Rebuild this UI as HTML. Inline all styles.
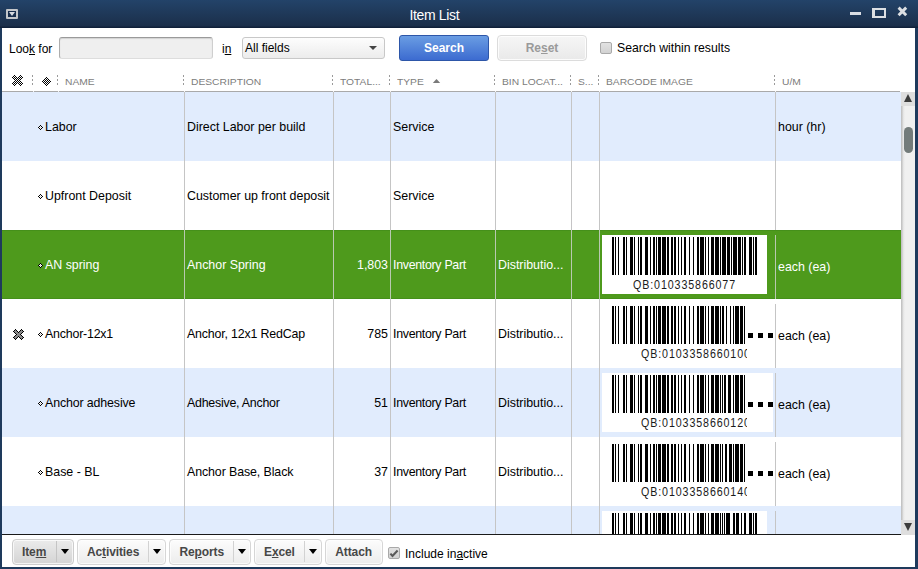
<!DOCTYPE html><html><head><meta charset="utf-8"><style>
*{margin:0;padding:0;box-sizing:border-box}
html,body{width:918px;height:569px;overflow:hidden;background:#fff}
body{position:relative;font-family:"Liberation Sans", sans-serif;color:#000}
.a{position:absolute}
.t{position:absolute;white-space:nowrap;line-height:14px}
.cell{font-size:12.4px}
.hd{position:absolute;font-size:9.7px;transform:scaleX(1.06);transform-origin:0 0;color:#7c7c7c;white-space:nowrap;line-height:12px;top:75.6px}
.sep{position:absolute;top:75px;width:1px;height:11px;background:repeating-linear-gradient(#9a9a9a 0 2px,transparent 2px 4px)}
.btn{position:absolute;top:539px;height:26px;border:1px solid #d6d6d6;border-radius:4px;background:linear-gradient(#fcfcfc,#ececec);box-shadow:inset 0 0 0 1px rgba(255,255,255,.7);font-weight:bold;font-size:12px;letter-spacing:-0.12px;color:#474747;white-space:nowrap}
.bt{position:absolute;top:5px;line-height:14px}
.dd{position:absolute;top:1px;width:1px;height:21px;background:#d2d2d2}
.arr{position:absolute;top:9px;width:0;height:0;border-left:4px solid transparent;border-right:4px solid transparent;border-top:5px solid #000}
u{text-decoration:underline;text-underline-offset:1px}
</style></head><body>

<div class="a" style="left:0;top:0;width:918px;height:569px;background:#1e3a5c"></div>
<div class="a" style="left:0;top:0;width:918px;height:28px;background:linear-gradient(#234369 0px,#1b2f4a 26px,#10213a 27px,#10213a 28px)"></div>
<div class="a" style="left:2px;top:28px;width:913px;height:539px;background:#fff"></div>
<div class="a" style="left:6px;top:9px;width:11.6px;height:9.8px;border:2px solid #c3c6ca;border-radius:1px;background:#172d4c"></div>
<div class="a" style="left:9px;top:12px;width:0;height:0;border-left:3px solid transparent;border-right:3px solid transparent;border-top:4px solid #d6dae0"></div>
<div class="t" style="left:409.5px;top:7px;font-size:14px;letter-spacing:-0.35px;color:#fff;line-height:16px">Item List</div>
<div class="a" style="left:850px;top:11.6px;width:11px;height:3px;background:#d9dde3"></div>
<div class="a" style="left:872px;top:8px;width:14px;height:10px;border:2px solid #dcdfe3;border-left-width:3px"></div>
<svg class="a" style="left:896.5px;top:5.9px" width="11" height="11" viewBox="0 0 11 11"><path d="M1.6 1.6L9.2 9.2M9.2 1.6L1.6 9.2" stroke="#dcdfe3" stroke-width="2.9"/></svg>
<div class="t" style="left:9px;top:42px;font-size:12px">Loo<u>k</u> for</div>
<div class="a" style="left:59px;top:37px;width:154px;height:22px;border:1px solid;border-color:#9a9a9a #cfcfcf #dddddd #adadad;border-radius:3px;background:#efefef;box-shadow:inset 0 1px 1px rgba(0,0,0,.12)"></div>
<div class="t" style="left:222px;top:42px;font-size:12px">i<u>n</u></div>
<div class="a" style="left:242px;top:37px;width:143px;height:22px;border:1px solid #c8c8c8;border-radius:3px;background:linear-gradient(#fdfdfd,#ececec)"></div>
<div class="t" style="left:245px;top:41px;font-size:12px">All fields</div>
<div class="a" style="left:369px;top:46px;width:0;height:0;border-left:4px solid transparent;border-right:4px solid transparent;border-top:4px solid #454545"></div>
<div class="a" style="left:399px;top:35px;width:90px;height:26px;border:1px solid #2d56a8;border-radius:3px;background:linear-gradient(#6a9de3,#3c6bd0);color:#fff;font-weight:bold;font-size:12px;text-align:center;line-height:24px">Search</div>
<div class="a" style="left:497px;top:35px;width:90px;height:26px;border:1px solid #dcdcdc;border-radius:4px;background:linear-gradient(#f6f6f6,#e9e9e9);box-shadow:inset 0 0 0 1px rgba(255,255,255,.8);color:#9a9a9a;font-weight:bold;font-size:12px;text-align:center;line-height:25px">Re<u>s</u>et</div>
<div class="a" style="left:600px;top:42px;width:12px;height:12px;border:1px solid #a9a9a9;border-radius:2px;background:linear-gradient(#e2e2e2,#d2d2d2)"></div>
<div class="t" style="left:617px;top:41px;font-size:12.25px">Search within results</div>
<svg class="a" style="left:10px;top:73px" width="16" height="16" shape-rendering="crispEdges"><path d="M4 2h1v1h-1zM10 2h1v1h-1zM3 3h1v1h-1zM5 3h1v1h-1zM9 3h1v1h-1zM11 3h1v1h-1zM2 4h1v1h-1zM4 4h1v1h-1zM6 4h1v1h-1zM8 4h1v1h-1zM10 4h1v1h-1zM12 4h1v1h-1zM3 5h1v1h-1zM5 5h1v1h-1zM7 5h1v1h-1zM9 5h1v1h-1zM11 5h1v1h-1zM4 6h1v1h-1zM6 6h1v1h-1zM8 6h1v1h-1zM10 6h1v1h-1zM5 7h1v1h-1zM7 7h1v1h-1zM9 7h1v1h-1zM4 8h1v1h-1zM6 8h1v1h-1zM8 8h1v1h-1zM10 8h1v1h-1zM3 9h1v1h-1zM5 9h1v1h-1zM7 9h1v1h-1zM9 9h1v1h-1zM11 9h1v1h-1zM2 10h1v1h-1zM4 10h1v1h-1zM6 10h1v1h-1zM8 10h1v1h-1zM10 10h1v1h-1zM12 10h1v1h-1zM3 11h1v1h-1zM5 11h1v1h-1zM9 11h1v1h-1zM11 11h1v1h-1zM4 12h1v1h-1zM10 12h1v1h-1z" fill="#000"/></svg>
<svg class="a" style="left:40px;top:74px" width="14" height="14" shape-rendering="crispEdges"><path d="M6 3h1v1h-1zM5 4h1v1h-1zM7 4h1v1h-1zM4 5h1v1h-1zM6 5h1v1h-1zM8 5h1v1h-1zM3 6h1v1h-1zM5 6h1v1h-1zM7 6h1v1h-1zM9 6h1v1h-1zM2 7h1v1h-1zM4 7h1v1h-1zM6 7h1v1h-1zM8 7h1v1h-1zM10 7h1v1h-1zM3 8h1v1h-1zM5 8h1v1h-1zM7 8h1v1h-1zM9 8h1v1h-1zM4 9h1v1h-1zM6 9h1v1h-1zM8 9h1v1h-1zM5 10h1v1h-1zM7 10h1v1h-1zM6 11h1v1h-1z" fill="#000"/></svg>
<div class="sep" style="left:32px"></div>
<div class="sep" style="left:57px"></div>
<div class="sep" style="left:183px"></div>
<div class="sep" style="left:332px"></div>
<div class="sep" style="left:389px"></div>
<div class="sep" style="left:494px"></div>
<div class="sep" style="left:570px"></div>
<div class="sep" style="left:598px"></div>
<div class="sep" style="left:774px"></div>
<div class="hd" style="left:65px">NAME</div>
<div class="hd" style="left:191px">DESCRIPTION</div>
<div class="hd" style="left:340px">TOTAL...</div>
<div class="hd" style="left:397px">TYPE</div>
<div class="hd" style="left:502px">BIN LOCAT...</div>
<div class="hd" style="left:578px">S...</div>
<div class="hd" style="left:606px">BARCODE IMAGE</div>
<div class="hd" style="left:782px">U/M</div>
<svg class="a" style="left:432px;top:78px" width="10" height="6"><path d="M0.8 5L8.2 5L4.5 1Z" fill="#7a7a7a"/></svg>
<div class="a" style="left:2px;top:91px;width:898px;height:1px;background:#a9a9a9"></div>
<div class="a" style="left:33px;top:91px;width:1px;height:1px;background:#f4f4f4"></div>
<div class="a" style="left:58px;top:91px;width:1px;height:1px;background:#f4f4f4"></div>
<div class="a" style="left:184px;top:91px;width:1px;height:1px;background:#f4f4f4"></div>
<div class="a" style="left:333px;top:91px;width:1px;height:1px;background:#f4f4f4"></div>
<div class="a" style="left:390px;top:91px;width:1px;height:1px;background:#f4f4f4"></div>
<div class="a" style="left:495px;top:91px;width:1px;height:1px;background:#f4f4f4"></div>
<div class="a" style="left:571px;top:91px;width:1px;height:1px;background:#f4f4f4"></div>
<div class="a" style="left:599px;top:91px;width:1px;height:1px;background:#f4f4f4"></div>
<div class="a" style="left:775px;top:91px;width:1px;height:1px;background:#f4f4f4"></div>
<div class="a" style="left:2px;top:92px;width:899px;height:442px;overflow:hidden">
<div class="a" style="left:0;top:0px;width:899px;height:69px;background:#e1ecfd">
<div class="a" style="left:182px;top:0px;width:1px;height:69px;background:#c5c5c5"></div>
<div class="a" style="left:331px;top:0px;width:1px;height:69px;background:#c5c5c5"></div>
<div class="a" style="left:388px;top:0px;width:1px;height:69px;background:#c5c5c5"></div>
<div class="a" style="left:493px;top:0px;width:1px;height:69px;background:#c5c5c5"></div>
<div class="a" style="left:569px;top:0px;width:1px;height:69px;background:#c5c5c5"></div>
<div class="a" style="left:597px;top:0px;width:1px;height:69px;background:#c5c5c5"></div>
<div class="a" style="left:773px;top:0px;width:1px;height:69px;background:#c5c5c5"></div>
<svg class="a" style="left:36px;top:33px" width="5" height="5" shape-rendering="crispEdges"><path d="M2 1h1v1h1v1h-1v1h-1v-1h-1v-1h1z" fill="#ffffff"/><path d="M2 2h1v1h-1z" fill="#c8c8c8"/><path d="M2 0h1v1h-1zM1 1h1v1h-1zM3 1h1v1h-1zM0 2h1v1h-1zM4 2h1v1h-1zM1 3h1v1h-1zM3 3h1v1h-1zM2 4h1v1h-1z" fill="#000"/></svg>
<div class="t cell" style="left:43px;top:28px;color:#000">Labor</div>
<div class="t cell" style="left:185px;top:28px;color:#000">Direct Labor per build</div>
<div class="t cell" style="left:391px;top:28px;color:#000">Service</div>
<div class="t cell" style="left:776px;top:28px;color:#000">hour (hr)</div>
</div>
<div class="a" style="left:0;top:69px;width:899px;height:69px;background:#ffffff">
<div class="a" style="left:182px;top:0px;width:1px;height:69px;background:#c5c5c5"></div>
<div class="a" style="left:331px;top:0px;width:1px;height:69px;background:#c5c5c5"></div>
<div class="a" style="left:388px;top:0px;width:1px;height:69px;background:#c5c5c5"></div>
<div class="a" style="left:493px;top:0px;width:1px;height:69px;background:#c5c5c5"></div>
<div class="a" style="left:569px;top:0px;width:1px;height:69px;background:#c5c5c5"></div>
<div class="a" style="left:597px;top:0px;width:1px;height:69px;background:#c5c5c5"></div>
<div class="a" style="left:773px;top:0px;width:1px;height:69px;background:#c5c5c5"></div>
<svg class="a" style="left:36px;top:33px" width="5" height="5" shape-rendering="crispEdges"><path d="M2 1h1v1h1v1h-1v1h-1v-1h-1v-1h1z" fill="#ffffff"/><path d="M2 2h1v1h-1z" fill="#c8c8c8"/><path d="M2 0h1v1h-1zM1 1h1v1h-1zM3 1h1v1h-1zM0 2h1v1h-1zM4 2h1v1h-1zM1 3h1v1h-1zM3 3h1v1h-1zM2 4h1v1h-1z" fill="#000"/></svg>
<div class="t cell" style="left:43px;top:28px;color:#000">Upfront Deposit</div>
<div class="t cell" style="left:185px;top:28px;color:#000">Customer up front deposit</div>
<div class="t cell" style="left:391px;top:28px;color:#000">Service</div>
</div>
<div class="a" style="left:0;top:138px;width:899px;height:69px;background:#4e9a1c">
<div class="a" style="left:0;top:0;width:899px;height:1px;background:#45901a"></div>
<div class="a" style="left:0;top:68px;width:899px;height:1px;background:#45901a"></div>
<div class="a" style="left:182px;top:0px;width:1px;height:69px;background:#b9c9b0"></div>
<div class="a" style="left:331px;top:0px;width:1px;height:69px;background:#b9c9b0"></div>
<div class="a" style="left:388px;top:0px;width:1px;height:69px;background:#b9c9b0"></div>
<div class="a" style="left:493px;top:0px;width:1px;height:69px;background:#b9c9b0"></div>
<div class="a" style="left:569px;top:0px;width:1px;height:69px;background:#b9c9b0"></div>
<div class="a" style="left:597px;top:0px;width:1px;height:69px;background:#b9c9b0"></div>
<div class="a" style="left:773px;top:5px;width:1px;height:64px;background:#b9c9b0"></div>
<svg class="a" style="left:36px;top:33px" width="5" height="5" shape-rendering="crispEdges"><path d="M2 1h1v1h1v1h-1v1h-1v-1h-1v-1h1z" fill="#ffffff"/><path d="M2 2h1v1h-1z" fill="#c8c8c8"/><path d="M2 0h1v1h-1zM1 1h1v1h-1zM3 1h1v1h-1zM0 2h1v1h-1zM4 2h1v1h-1zM1 3h1v1h-1zM3 3h1v1h-1zM2 4h1v1h-1z" fill="#000"/></svg>
<div class="t cell" style="left:43px;top:28px;color:#fff">AN spring</div>
<div class="t cell" style="left:185px;top:28px;color:#fff">Anchor Spring</div>
<div class="t cell" style="right:513px;top:28px;color:#fff">1,803</div>
<div class="t cell" style="left:391px;top:28px;color:#fff"><span style="letter-spacing:-0.3px">Inventory Part</span></div>
<div class="t cell" style="left:496px;top:28px;color:#fff">Distributio...</div>
<div class="t cell" style="left:776px;top:30px;color:#fff">each (ea)</div>
<div class="a" style="left:600px;top:5px;width:165px;height:59px;background:#fff"></div>
<div class="a" style="left:610px;top:7px;width:145px;height:60px;overflow:hidden">
<svg class="a" style="left:0;top:0" width="145" height="38"><path d="M0 0h2v38h-2zM3 0h1v38h-1zM6 0h1v38h-1zM11 0h2v38h-2zM14 0h1v38h-1zM18 0h3v38h-3zM22 0h1v38h-1zM26 0h1v38h-1zM28 0h2v38h-2zM33 0h3v38h-3zM38 0h1v38h-1zM41 0h2v38h-2zM44 0h1v38h-1zM46 0h3v38h-3zM50 0h4v38h-4zM55 0h2v38h-2zM59 0h2v38h-2zM62 0h2v38h-2zM66 0h1v38h-1zM69 0h1v38h-1zM72 0h2v38h-2zM77 0h1v38h-1zM81 0h1v38h-1zM85 0h2v38h-2zM88 0h4v38h-4zM93 0h1v38h-1zM96 0h1v38h-1zM99 0h3v38h-3zM103 0h4v38h-4zM108 0h1v38h-1zM110 0h4v38h-4zM115 0h3v38h-3zM119 0h1v38h-1zM121 0h4v38h-4zM126 0h3v38h-3zM130 0h1v38h-1zM132 0h2v38h-2zM137 0h3v38h-3zM141 0h1v38h-1zM143 0h2v38h-2z" fill="#000"/></svg>
<div class="t" style="left:21.0px;top:41px;font-size:12px;letter-spacing:1.0px;transform:scaleX(0.89);transform-origin:0 0;color:#1a1a1a">QB:010335866077</div>
</div>
</div>
<div class="a" style="left:0;top:207px;width:899px;height:69px;background:#ffffff">
<div class="a" style="left:182px;top:0px;width:1px;height:69px;background:#c5c5c5"></div>
<div class="a" style="left:331px;top:0px;width:1px;height:69px;background:#c5c5c5"></div>
<div class="a" style="left:388px;top:0px;width:1px;height:69px;background:#c5c5c5"></div>
<div class="a" style="left:493px;top:0px;width:1px;height:69px;background:#c5c5c5"></div>
<div class="a" style="left:569px;top:0px;width:1px;height:69px;background:#c5c5c5"></div>
<div class="a" style="left:597px;top:0px;width:1px;height:69px;background:#c5c5c5"></div>
<div class="a" style="left:773px;top:5px;width:1px;height:64px;background:#c5c5c5"></div>
<svg class="a" style="left:8px;top:27px" width="17" height="17" shape-rendering="crispEdges"><path d="M5 4h1v1h-1zM5 10h1v1h-1zM8 9h1v1h-1zM10 6h1v1h-1zM9 8h1v1h-1zM11 5h1v1h-1zM10 9h1v1h-1zM11 11h1v1h-1zM7 7h1v1h-1zM6 5h1v1h-1zM6 11h1v1h-1zM7 10h1v1h-1zM4 5h1v1h-1zM5 6h1v1h-1zM4 11h1v1h-1zM9 7h1v1h-1zM11 4h1v1h-1zM5 12h1v1h-1zM9 10h1v1h-1zM10 5h1v1h-1zM8 8h1v1h-1zM10 11h1v1h-1zM11 10h1v1h-1zM7 9h1v1h-1zM6 7h1v1h-1zM7 6h1v1h-1zM6 10h1v1h-1zM12 5h1v1h-1zM12 11h1v1h-1zM5 5h1v1h-1zM5 11h1v1h-1zM9 9h1v1h-1zM8 7h1v1h-1zM9 6h1v1h-1zM10 7h1v1h-1zM11 6h1v1h-1zM11 12h1v1h-1zM10 10h1v1h-1zM6 6h1v1h-1zM6 9h1v1h-1zM7 8h1v1h-1z" fill="#8a8a8a"/><path d="M12 4h1v1h-1zM6 12h1v1h-1zM12 10h1v1h-1zM4 6h1v1h-1zM4 12h1v1h-1zM5 7h1v1h-1zM5 13h1v1h-1zM9 5h1v1h-1zM8 6h1v1h-1zM9 11h1v1h-1zM13 5h1v1h-1zM13 11h1v1h-1zM10 12h1v1h-1zM6 8h1v1h-1zM12 6h1v1h-1zM12 12h1v1h-1zM5 3h1v1h-1zM5 9h1v1h-1zM11 7h1v1h-1zM10 8h1v1h-1zM11 13h1v1h-1zM6 4h1v1h-1zM3 5h1v1h-1zM3 11h1v1h-1zM4 4h1v1h-1zM4 10h1v1h-1zM10 4h1v1h-1zM11 3h1v1h-1zM11 9h1v1h-1zM8 10h1v1h-1zM7 5h1v1h-1zM7 11h1v1h-1z" fill="#000"/></svg>
<svg class="a" style="left:36px;top:33px" width="5" height="5" shape-rendering="crispEdges"><path d="M2 1h1v1h1v1h-1v1h-1v-1h-1v-1h1z" fill="#ffffff"/><path d="M2 2h1v1h-1z" fill="#c8c8c8"/><path d="M2 0h1v1h-1zM1 1h1v1h-1zM3 1h1v1h-1zM0 2h1v1h-1zM4 2h1v1h-1zM1 3h1v1h-1zM3 3h1v1h-1zM2 4h1v1h-1z" fill="#000"/></svg>
<div class="t cell" style="left:43px;top:28px;color:#000"><span style="letter-spacing:-0.2px">Anchor-12x1</span></div>
<div class="t cell" style="left:185px;top:28px;color:#000"><span style="letter-spacing:-0.17px">Anchor, 12x1 RedCap</span></div>
<div class="t cell" style="right:513px;top:28px;color:#000">785</div>
<div class="t cell" style="left:391px;top:28px;color:#000"><span style="letter-spacing:-0.3px">Inventory Part</span></div>
<div class="t cell" style="left:496px;top:28px;color:#000">Distributio...</div>
<div class="t cell" style="left:776px;top:30px;color:#000">each (ea)</div>
<div class="a" style="left:600px;top:5px;width:171px;height:59px;background:#fff"></div>
<div class="a" style="left:610px;top:7px;width:135px;height:60px;overflow:hidden">
<svg class="a" style="left:0;top:0" width="167" height="38"><path d="M0 0h2v38h-2zM3 0h1v38h-1zM6 0h1v38h-1zM11 0h2v38h-2zM14 0h1v38h-1zM18 0h3v38h-3zM22 0h1v38h-1zM26 0h1v38h-1zM28 0h2v38h-2zM33 0h3v38h-3zM38 0h1v38h-1zM41 0h2v38h-2zM44 0h1v38h-1zM46 0h3v38h-3zM50 0h4v38h-4zM55 0h2v38h-2zM59 0h2v38h-2zM62 0h2v38h-2zM66 0h1v38h-1zM69 0h1v38h-1zM72 0h2v38h-2zM77 0h1v38h-1zM81 0h1v38h-1zM85 0h2v38h-2zM88 0h4v38h-4zM93 0h1v38h-1zM96 0h1v38h-1zM99 0h3v38h-3zM103 0h4v38h-4zM108 0h1v38h-1zM110 0h2v38h-2zM114 0h1v38h-1zM118 0h1v38h-1zM121 0h1v38h-1zM123 0h4v38h-4zM128 0h3v38h-3zM132 0h1v38h-1zM135 0h3v38h-3zM139 0h2v38h-2zM143 0h1v38h-1zM146 0h1v38h-1zM148 0h4v38h-4zM154 0h2v38h-2zM159 0h3v38h-3zM163 0h1v38h-1zM165 0h2v38h-2z" fill="#000"/></svg>
<div class="t" style="left:28.6px;top:41px;font-size:12px;letter-spacing:1.0px;transform:scaleX(0.89);transform-origin:0 0;color:#1a1a1a">QB:0103358660100</div>
</div>
<div class="a" style="left:746px;top:34px;width:5px;height:5px;background:#000"></div>
<div class="a" style="left:756px;top:34px;width:5px;height:5px;background:#000"></div>
<div class="a" style="left:766px;top:34px;width:5px;height:5px;background:#000"></div>
</div>
<div class="a" style="left:0;top:276px;width:899px;height:69px;background:#e1ecfd">
<div class="a" style="left:182px;top:0px;width:1px;height:69px;background:#c5c5c5"></div>
<div class="a" style="left:331px;top:0px;width:1px;height:69px;background:#c5c5c5"></div>
<div class="a" style="left:388px;top:0px;width:1px;height:69px;background:#c5c5c5"></div>
<div class="a" style="left:493px;top:0px;width:1px;height:69px;background:#c5c5c5"></div>
<div class="a" style="left:569px;top:0px;width:1px;height:69px;background:#c5c5c5"></div>
<div class="a" style="left:597px;top:0px;width:1px;height:69px;background:#c5c5c5"></div>
<div class="a" style="left:773px;top:5px;width:1px;height:64px;background:#c5c5c5"></div>
<svg class="a" style="left:36px;top:33px" width="5" height="5" shape-rendering="crispEdges"><path d="M2 1h1v1h1v1h-1v1h-1v-1h-1v-1h1z" fill="#ffffff"/><path d="M2 2h1v1h-1z" fill="#c8c8c8"/><path d="M2 0h1v1h-1zM1 1h1v1h-1zM3 1h1v1h-1zM0 2h1v1h-1zM4 2h1v1h-1zM1 3h1v1h-1zM3 3h1v1h-1zM2 4h1v1h-1z" fill="#000"/></svg>
<div class="t cell" style="left:43px;top:28px;color:#000"><span style="letter-spacing:-0.13px">Anchor adhesive</span></div>
<div class="t cell" style="left:185px;top:28px;color:#000"><span style="letter-spacing:-0.24px">Adhesive, Anchor</span></div>
<div class="t cell" style="right:513px;top:28px;color:#000">51</div>
<div class="t cell" style="left:391px;top:28px;color:#000"><span style="letter-spacing:-0.3px">Inventory Part</span></div>
<div class="t cell" style="left:496px;top:28px;color:#000">Distributio...</div>
<div class="t cell" style="left:776px;top:30px;color:#000">each (ea)</div>
<div class="a" style="left:600px;top:5px;width:171px;height:59px;background:#fff"></div>
<div class="a" style="left:610px;top:7px;width:135px;height:60px;overflow:hidden">
<svg class="a" style="left:0;top:0" width="167" height="38"><path d="M0 0h2v38h-2zM3 0h1v38h-1zM6 0h1v38h-1zM11 0h2v38h-2zM14 0h1v38h-1zM18 0h3v38h-3zM22 0h1v38h-1zM26 0h1v38h-1zM28 0h2v38h-2zM33 0h3v38h-3zM38 0h1v38h-1zM41 0h2v38h-2zM44 0h1v38h-1zM46 0h3v38h-3zM50 0h4v38h-4zM55 0h2v38h-2zM59 0h2v38h-2zM62 0h2v38h-2zM66 0h1v38h-1zM69 0h1v38h-1zM72 0h2v38h-2zM77 0h1v38h-1zM81 0h1v38h-1zM85 0h2v38h-2zM88 0h4v38h-4zM93 0h1v38h-1zM96 0h1v38h-1zM99 0h3v38h-3zM103 0h4v38h-4zM108 0h1v38h-1zM110 0h1v38h-1zM112 0h2v38h-2zM116 0h3v38h-3zM121 0h1v38h-1zM123 0h4v38h-4zM128 0h3v38h-3zM132 0h1v38h-1zM135 0h3v38h-3zM139 0h2v38h-2zM143 0h3v38h-3zM147 0h1v38h-1zM149 0h4v38h-4zM154 0h2v38h-2zM159 0h3v38h-3zM163 0h1v38h-1zM165 0h2v38h-2z" fill="#000"/></svg>
<div class="t" style="left:28.6px;top:41px;font-size:12px;letter-spacing:1.0px;transform:scaleX(0.89);transform-origin:0 0;color:#1a1a1a">QB:0103358660120</div>
</div>
<div class="a" style="left:746px;top:34px;width:5px;height:5px;background:#000"></div>
<div class="a" style="left:756px;top:34px;width:5px;height:5px;background:#000"></div>
<div class="a" style="left:766px;top:34px;width:5px;height:5px;background:#000"></div>
</div>
<div class="a" style="left:0;top:345px;width:899px;height:69px;background:#ffffff">
<div class="a" style="left:182px;top:0px;width:1px;height:69px;background:#c5c5c5"></div>
<div class="a" style="left:331px;top:0px;width:1px;height:69px;background:#c5c5c5"></div>
<div class="a" style="left:388px;top:0px;width:1px;height:69px;background:#c5c5c5"></div>
<div class="a" style="left:493px;top:0px;width:1px;height:69px;background:#c5c5c5"></div>
<div class="a" style="left:569px;top:0px;width:1px;height:69px;background:#c5c5c5"></div>
<div class="a" style="left:597px;top:0px;width:1px;height:69px;background:#c5c5c5"></div>
<div class="a" style="left:773px;top:5px;width:1px;height:64px;background:#c5c5c5"></div>
<svg class="a" style="left:36px;top:33px" width="5" height="5" shape-rendering="crispEdges"><path d="M2 1h1v1h1v1h-1v1h-1v-1h-1v-1h1z" fill="#ffffff"/><path d="M2 2h1v1h-1z" fill="#c8c8c8"/><path d="M2 0h1v1h-1zM1 1h1v1h-1zM3 1h1v1h-1zM0 2h1v1h-1zM4 2h1v1h-1zM1 3h1v1h-1zM3 3h1v1h-1zM2 4h1v1h-1z" fill="#000"/></svg>
<div class="t cell" style="left:43px;top:28px;color:#000">Base - BL</div>
<div class="t cell" style="left:185px;top:28px;color:#000"><span style="letter-spacing:-0.1px">Anchor Base, Black</span></div>
<div class="t cell" style="right:513px;top:28px;color:#000">37</div>
<div class="t cell" style="left:391px;top:28px;color:#000"><span style="letter-spacing:-0.3px">Inventory Part</span></div>
<div class="t cell" style="left:496px;top:28px;color:#000">Distributio...</div>
<div class="t cell" style="left:776px;top:30px;color:#000">each (ea)</div>
<div class="a" style="left:600px;top:5px;width:171px;height:59px;background:#fff"></div>
<div class="a" style="left:610px;top:7px;width:135px;height:60px;overflow:hidden">
<svg class="a" style="left:0;top:0" width="167" height="38"><path d="M0 0h2v38h-2zM3 0h1v38h-1zM6 0h1v38h-1zM11 0h2v38h-2zM14 0h1v38h-1zM18 0h3v38h-3zM22 0h1v38h-1zM26 0h1v38h-1zM28 0h2v38h-2zM33 0h3v38h-3zM38 0h1v38h-1zM41 0h2v38h-2zM44 0h1v38h-1zM46 0h3v38h-3zM50 0h4v38h-4zM55 0h2v38h-2zM59 0h2v38h-2zM62 0h2v38h-2zM66 0h1v38h-1zM69 0h1v38h-1zM72 0h2v38h-2zM77 0h1v38h-1zM81 0h1v38h-1zM85 0h2v38h-2zM88 0h4v38h-4zM93 0h1v38h-1zM96 0h1v38h-1zM99 0h3v38h-3zM103 0h4v38h-4zM108 0h1v38h-1zM110 0h1v38h-1zM113 0h2v38h-2zM117 0h3v38h-3zM121 0h1v38h-1zM123 0h4v38h-4zM128 0h3v38h-3zM132 0h1v38h-1zM135 0h3v38h-3zM139 0h2v38h-2zM143 0h2v38h-2zM147 0h3v38h-3zM152 0h1v38h-1zM154 0h2v38h-2zM159 0h3v38h-3zM163 0h1v38h-1zM165 0h2v38h-2z" fill="#000"/></svg>
<div class="t" style="left:28.6px;top:41px;font-size:12px;letter-spacing:1.0px;transform:scaleX(0.89);transform-origin:0 0;color:#1a1a1a">QB:0103358660140</div>
</div>
<div class="a" style="left:746px;top:34px;width:5px;height:5px;background:#000"></div>
<div class="a" style="left:756px;top:34px;width:5px;height:5px;background:#000"></div>
<div class="a" style="left:766px;top:34px;width:5px;height:5px;background:#000"></div>
</div>
<div class="a" style="left:0;top:414px;width:899px;height:69px;background:#e1ecfd">
<div class="a" style="left:182px;top:0px;width:1px;height:69px;background:#c5c5c5"></div>
<div class="a" style="left:331px;top:0px;width:1px;height:69px;background:#c5c5c5"></div>
<div class="a" style="left:388px;top:0px;width:1px;height:69px;background:#c5c5c5"></div>
<div class="a" style="left:493px;top:0px;width:1px;height:69px;background:#c5c5c5"></div>
<div class="a" style="left:569px;top:0px;width:1px;height:69px;background:#c5c5c5"></div>
<div class="a" style="left:597px;top:0px;width:1px;height:69px;background:#c5c5c5"></div>
<div class="a" style="left:773px;top:5px;width:1px;height:64px;background:#c5c5c5"></div>
<div class="a" style="left:600px;top:5px;width:165px;height:59px;background:#fff"></div>
<div class="a" style="left:610px;top:7px;width:145px;height:60px;overflow:hidden">
<svg class="a" style="left:0;top:0" width="145" height="38"><path d="M0 0h2v38h-2zM3 0h1v38h-1zM6 0h1v38h-1zM11 0h2v38h-2zM14 0h1v38h-1zM18 0h3v38h-3zM22 0h1v38h-1zM26 0h1v38h-1zM28 0h2v38h-2zM33 0h3v38h-3zM38 0h1v38h-1zM41 0h2v38h-2zM44 0h1v38h-1zM46 0h3v38h-3zM50 0h4v38h-4zM55 0h2v38h-2zM59 0h2v38h-2zM62 0h2v38h-2zM66 0h1v38h-1zM69 0h1v38h-1zM72 0h2v38h-2zM77 0h1v38h-1zM81 0h1v38h-1zM85 0h2v38h-2zM88 0h4v38h-4zM93 0h1v38h-1zM96 0h1v38h-1zM99 0h3v38h-3zM103 0h4v38h-4zM108 0h1v38h-1zM110 0h1v38h-1zM112 0h1v38h-1zM114 0h4v38h-4zM121 0h2v38h-2zM124 0h3v38h-3zM129 0h1v38h-1zM132 0h2v38h-2zM137 0h3v38h-3zM141 0h1v38h-1zM143 0h2v38h-2z" fill="#000"/></svg>
<div class="t" style="left:21.0px;top:41px;font-size:12px;letter-spacing:1.0px;transform:scaleX(0.89);transform-origin:0 0;color:#1a1a1a">QB:010335866092</div>
</div>
</div>
</div>
<div class="a" style="left:2px;top:534px;width:899px;height:1px;background:#1a1a1a"></div>
<div class="a" style="left:901px;top:92px;width:14px;height:443px;background:linear-gradient(to right,#c3c3c3 0,#c3c3c3 1px,#e2e2e2 2px,#f0f0f0 4px)"></div>
<div class="a" style="left:901px;top:92px;width:14px;height:14px;background:#dedede"></div>
<div class="a" style="left:904px;top:94px;width:0;height:0;border-left:4.5px solid transparent;border-right:4.5px solid transparent;border-bottom:8px solid #3c3c3c"></div>
<div class="a" style="left:901px;top:520px;width:14px;height:15px;background:#dedede"></div>
<div class="a" style="left:904px;top:523px;width:0;height:0;border-left:4.5px solid transparent;border-right:4.5px solid transparent;border-top:8px solid #3c3c3c"></div>
<div class="a" style="left:904px;top:127px;width:9px;height:26px;border-radius:4.5px;background:#737b7a"></div>
<div class="btn" style="left:12px;width:62px;background:linear-gradient(#ebebeb,#d4d4d4);border-color:#cdcdcd"><span class="bt" style="left:9px">Ite<u>m</u></span><div class="dd" style="left:43px;background:#c4c4c4"></div><div class="arr" style="left:48px"></div></div>
<div class="btn" style="left:77px;width:89px"><span class="bt" style="left:9px">Ac<u>t</u>ivities</span><div class="dd" style="left:70px"></div><div class="arr" style="left:75px"></div></div>
<div class="btn" style="left:169px;width:82px"><span class="bt" style="left:9.5px">Re<u>p</u>orts</span><div class="dd" style="left:63px"></div><div class="arr" style="left:68px"></div></div>
<div class="btn" style="left:254px;width:68px"><span class="bt" style="left:9px">E<u>x</u>cel</span><div class="dd" style="left:49px"></div><div class="arr" style="left:54px"></div></div>
<div class="btn" style="left:325px;width:58px"><span class="bt" style="left:9.3px">Attach</span></div>
<div class="a" style="left:388px;top:547px;width:12px;height:12px;border:1px solid #a9a9a9;border-radius:2px;background:linear-gradient(#e2e2e2,#d2d2d2)"></div>
<svg class="a" style="left:388px;top:547px" width="12" height="12" viewBox="0 0 12 12"><path d="M2.4 6.6L4.5 8.9L9.6 3.6" fill="none" stroke="#5a5a5a" stroke-width="2.1"/></svg>
<div class="t" style="left:405px;top:547px;font-size:12px">Include in<u>a</u>ctive</div>
</body></html>
